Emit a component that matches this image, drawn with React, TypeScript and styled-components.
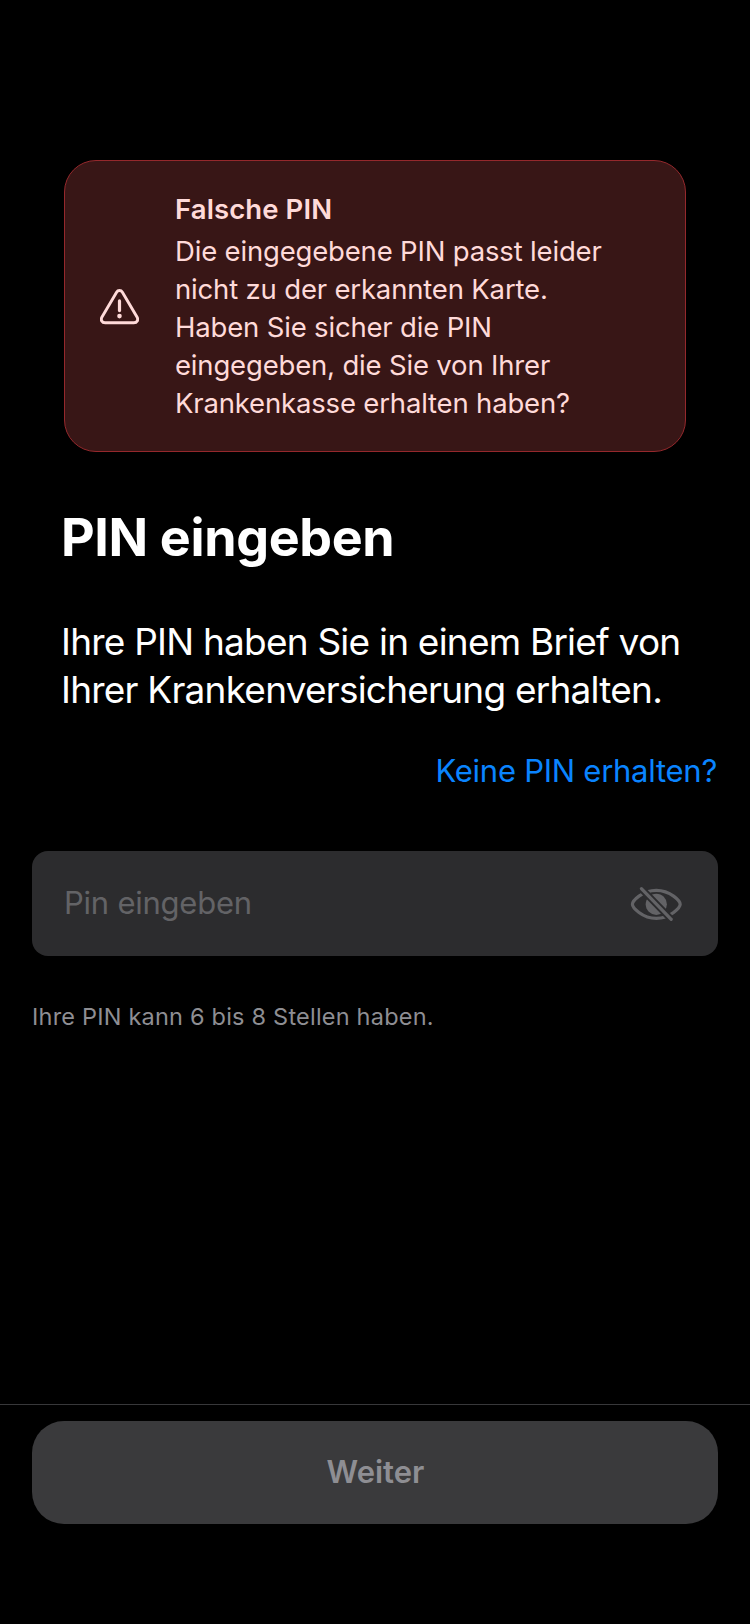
import React from 'react';
import styled, { createGlobalStyle } from 'styled-components';

const GlobalStyle = createGlobalStyle`
  *, *::before, *::after { box-sizing: border-box; }
  body { margin: 0; background: #000; }
`;

const Screen = styled.div`
  display: flex;
  flex-direction: column;
  width: 750px;
  height: 1624px;
  background: #000;
  color: #fff;
  font-family: Inter, 'Liberation Sans', sans-serif;
`;

const Content = styled.main`
  flex: 1;
  display: flex;
  flex-direction: column;
  padding: 160px 32px 0;
`;

const Alert = styled.section`
  display: flex;
  align-items: center;
  gap: 36px;
  height: 292px;
  margin: 0 32px;
  padding: 2px 35px 0;
  border: 1px solid #95282c;
  border-radius: 32px;
  background: #381616;
  color: #ffdad9;
`;

const AlertText = styled.div`
  flex: 1;
  letter-spacing: -0.175px;
  font-size: 27.5px;
  line-height: 38px;
`;

const AlertTitle = styled.h2`
  margin: 0 0 6px;
  font-size: 27.5px;
  font-weight: 600;
  line-height: 34px;
  letter-spacing: 0.1px;
`;

const AlertLine = styled.span`
  display: block;
  white-space: nowrap;
`;

const Heading = styled.h1`
  margin: 55px 29px 0;
  font-size: 52px;
  font-weight: 700;
  line-height: 62px;
  letter-spacing: -0.36px;
`;

const Lead = styled.p`
  margin: 49px 29px 0;
  font-size: 37px;
  line-height: 48px;
  letter-spacing: -0.78px;
  white-space: nowrap;
`;

const HelpLink = styled.a`
  align-self: flex-end;
  margin: 38px 1px 0 0;
  font-size: 31px;
  line-height: 38px;
  letter-spacing: -0.26px;
  color: #0a84ff;
`;

const Field = styled.label`
  display: flex;
  align-items: center;
  justify-content: space-between;
  height: 105px;
  margin-top: 61px;
  padding: 0 36px 0 32px;
  border-radius: 16px;
  background: #2c2c2e;
`;

const PinInput = styled.input`
  flex: 1;
  min-width: 0;
  padding: 0 0 2px;
  border: 0;
  outline: 0;
  background: none;
  color: #fff;
  font-family: inherit;
  font-size: 31px;
  line-height: 38px;
  letter-spacing: -0.24px;
  &::placeholder { color: #636366; opacity: 1; }
`;

const Hint = styled.p`
  margin: 46px 0 0;
  font-size: 23.5px;
  line-height: 30px;
  letter-spacing: 0.21px;
  color: #8e8e93;
`;

const Footer = styled.footer`
  height: 220px;
  padding: 16px 32px 0;
  border-top: 1px solid #38383a;
`;

const Submit = styled.button`
  display: block;
  width: 100%;
  height: 103px;
  padding: 0 0 2px 1px;
  border: 0;
  border-radius: 32px;
  background: #3a3a3c;
  color: #8e8e93;
  font-family: inherit;
  font-size: 31px;
  font-weight: 600;
  letter-spacing: 0;
`;

const WarningIcon = () => (
  <svg width="39" height="36" viewBox="0 0 39 36" fill="none" stroke="currentColor" strokeLinecap="round" strokeLinejoin="round">
    <path d="M16.6 3.2 L2 27.9 C0.4 30.9 1.9 33.8 5.2 33.8 H33.8 C37.1 33.8 38.6 30.9 37 27.9 L22.4 3.2 C21.1 1 17.9 1 16.6 3.2 Z" strokeWidth="2.9" />
    <path d="M19.5 11.9 V21.6" strokeWidth="3.2" />
    <circle cx="19.5" cy="27.1" r="2.3" fill="currentColor" stroke="none" />
  </svg>
);

const HiddenIcon = () => (
  <svg width="52" height="36" viewBox="0 0 52 36" fill="none" stroke="#636366" strokeWidth="3.2" strokeLinecap="round">
    <path d="M2.4 18.3 C2.4 15.2 12 4.3 26.3 4.3 C40.6 4.3 50.2 15.2 50.2 18.3 C50.2 21.4 40.6 32.4 26.3 32.4 C12 32.4 2.4 21.4 2.4 18.3 Z" />
    <circle cx="26.3" cy="18.3" r="10.6" fill="#636366" stroke="none" />
    <path d="M10 1.2 L43 35.2" stroke="#2c2c2e" strokeWidth="7" strokeLinecap="butt" />
    <path d="M11.4 2.7 L41.2 33.4" />
  </svg>
);

export default function App() {
  return (
    <Screen>
      <GlobalStyle />
      <Content>
        <Alert role="alert">
          <WarningIcon />
          <AlertText>
            <AlertTitle>Falsche PIN</AlertTitle>
            <AlertLine>Die eingegebene PIN passt leider</AlertLine>
            <AlertLine>nicht zu der erkannten Karte.</AlertLine>
            <AlertLine>Haben Sie sicher die PIN</AlertLine>
            <AlertLine>eingegeben, die Sie von Ihrer</AlertLine>
            <AlertLine>Krankenkasse erhalten haben?</AlertLine>
          </AlertText>
        </Alert>
        <Heading>PIN eingeben</Heading>
        <Lead>
          Ihre PIN haben Sie in einem Brief von
          <br />
          Ihrer Krankenversicherung erhalten.
        </Lead>
        <HelpLink>Keine PIN erhalten?</HelpLink>
        <Field>
          <PinInput type="password" placeholder="Pin eingeben" />
          <HiddenIcon />
        </Field>
        <Hint>Ihre PIN kann 6 bis 8 Stellen haben.</Hint>
      </Content>
      <Footer>
        <Submit disabled>Weiter</Submit>
      </Footer>
    </Screen>
  );
}
